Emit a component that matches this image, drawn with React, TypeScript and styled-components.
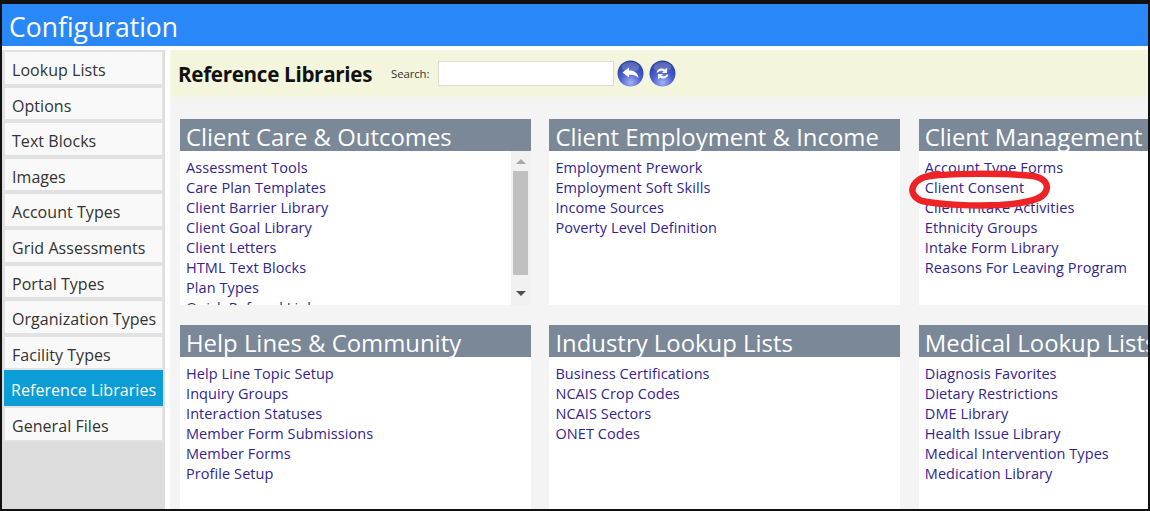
import styled, { createGlobalStyle } from 'styled-components'

const GlobalStyle = createGlobalStyle`
  html, body {
    margin: 0;
    padding: 0;
    width: 1150px;
    height: 511px;
    overflow: hidden;
    background: #000;
    font-family: "Open Sans", "Noto Sans", sans-serif;
  }
`

const Frame = styled.div`
  box-sizing: border-box;
  width: 1150px;
  height: 511px;
  padding: 4px 2px 2px 2px;
  background: #111;
  position: relative;
  overflow: hidden;
`

const Page = styled.div`
  height: 100%;
  background: #fff;
  display: flex;
  flex-direction: column;
`

const Header = styled.div`
  box-sizing: border-box;
  height: 42px;
  flex: none;
  background: #2a87f7;
  color: #fff;
  font-size: 26.5px;
  line-height: 37px;
  padding: 5px 0 0 7px;
`

const Body = styled.div`
  flex: 1;
  min-height: 0;
  margin-top: 4px;
  display: flex;
  gap: 5px;
`

const Sidebar = styled.div`
  width: 163px;
  flex: none;
  background: #dcdcdc;
  box-sizing: border-box;
  padding: 0 1px;
`

const NavItem = styled.div<{ $active?: boolean }>`
  box-sizing: border-box;
  height: 35.6px;
  border: 2px solid ${p => (p.$active ? '#dcdcdc' : '#e2e2e2')};
  border-width: ${p => (p.$active ? '0 1px' : '2px')};
  background: ${p => (p.$active ? '#0d9dd6' : '#f9f9f9')};
  color: ${p => (p.$active ? '#fff' : '#333')};
  font-size: 16px;
  line-height: ${p => (p.$active ? '30px' : '26px')};
  padding: ${p => (p.$active ? '5px 0 0 7px' : '5px 0 0 7px')};
  white-space: nowrap;
  letter-spacing: 0.05px;
`

const Main = styled.div`
  flex: 1;
  min-width: 0;
  background: #f4f4f4;
  overflow: hidden;
`

const Toolbar = styled.div`
  height: 47px;
  background: #f3f5dd;
  display: flex;
  align-items: center;
  padding-left: 8px;
`

const Title = styled.div`
  font-size: 20.6px;
  font-weight: 700;
  color: #111;
  width: 213px;
  letter-spacing: -0.3px;
  margin-top: 1px;
`

const SearchLabel = styled.div`
  font-size: 11.4px;
  color: #333;
  width: 47px;
  letter-spacing: -0.1px;
`

const SearchInput = styled.div`
  box-sizing: border-box;
  width: 176px;
  height: 25px;
  background: #fff;
  border: 1px solid #dcdcd0;
  margin-right: 3px;
`

const RoundIcon = styled.svg`
  width: 27px;
  height: 27px;
  margin-right: 5px;
`

const Grid = styled.div`
  display: grid;
  grid-template-columns: 351px 351px 351px;
  grid-template-rows: 186px 186px;
  column-gap: 18.4px;
  row-gap: 20px;
  padding: 22px 0 0 10px;
`

const Card = styled.div`
  background: #fff;
  position: relative;
  overflow: hidden;
  min-width: 0;
`

const CardHeader = styled.div`
  box-sizing: border-box;
  height: 32px;
  background: #7a8898;
  color: #fff;
  font-size: 23.9px;
  line-height: 28px;
  padding: 4px 0 0 6px;
  white-space: nowrap;
`

const LinkList = styled.div`
  padding: 7px 0 0 6px;
  height: 147px;
  overflow: hidden;
`

const LibLink = styled.div`
  font-size: 14.5px;
  line-height: 20px;
  color: #33248f;
  white-space: nowrap;
  letter-spacing: 0.08px;
`

const Track = styled.div`
  position: absolute;
  top: 32px;
  right: 0;
  bottom: 0;
  width: 20px;
  background: #f1f1f1;
`

const Thumb = styled.div`
  position: absolute;
  top: 20px;
  left: 2px;
  width: 15px;
  height: 104px;
  background: #c0c0c0;
`

const ArrowUp = styled.div`
  position: absolute;
  top: 8px;
  left: 5px;
  border-left: 5px solid transparent;
  border-right: 5px solid transparent;
  border-bottom: 5px solid #a8a8a8;
`

const ArrowDown = styled.div`
  position: absolute;
  bottom: 9px;
  left: 5px;
  border-left: 5px solid transparent;
  border-right: 5px solid transparent;
  border-top: 5px solid #505050;
`

const Scribble = styled.svg`
  position: absolute;
  left: 905px;
  top: 165px;
  width: 150px;
  height: 50px;
`

const sections = [
  {
    title: 'Client Care & Outcomes',
    scroll: true,
    links: ['Assessment Tools', 'Care Plan Templates', 'Client Barrier Library', 'Client Goal Library', 'Client Letters', 'HTML Text Blocks', 'Plan Types', 'Quick Referral Links'],
  },
  {
    title: 'Client Employment & Income',
    links: ['Employment Prework', 'Employment Soft Skills', 'Income Sources', 'Poverty Level Definition'],
  },
  {
    title: 'Client Management',
    links: ['Account Type Forms', 'Client Consent', 'Client Intake Activities', 'Ethnicity Groups', 'Intake Form Library', 'Reasons For Leaving Program'],
  },
  {
    title: 'Help Lines & Community',
    links: ['Help Line Topic Setup', 'Inquiry Groups', 'Interaction Statuses', 'Member Form Submissions', 'Member Forms', 'Profile Setup'],
  },
  {
    title: 'Industry Lookup Lists',
    links: ['Business Certifications', 'NCAIS Crop Codes', 'NCAIS Sectors', 'ONET Codes'],
  },
  {
    title: 'Medical Lookup Lists',
    links: ['Diagnosis Favorites', 'Dietary Restrictions', 'DME Library', 'Health Issue Library', 'Medical Intervention Types', 'Medication Library'],
  },
]

const navItems = ['Lookup Lists', 'Options', 'Text Blocks', 'Images', 'Account Types', 'Grid Assessments', 'Portal Types', 'Organization Types', 'Facility Types', 'Reference Libraries', 'General Files']

const Ball = ({ id }: { id: string }) => (
  <>
    <defs>
      <radialGradient id={id} cx="50%" cy="85%" r="80%">
        <stop offset="0%" stopColor="#a3b2f5" />
        <stop offset="50%" stopColor="#4a60cc" />
        <stop offset="100%" stopColor="#2a3ca0" />
      </radialGradient>
    </defs>
    <circle cx="13.5" cy="13.5" r="13" fill={`url(#${id})`} />
    <ellipse cx="13.5" cy="7" rx="9" ry="5" fill="#fff" opacity="0.2" />
  </>
)

export default function App() {
  return (
    <Frame>
      <GlobalStyle />
      <Page>
        <Header>Configuration</Header>
        <Body>
          <Sidebar>
            {navItems.map(n => (
              <NavItem key={n} $active={n === 'Reference Libraries'}>{n}</NavItem>
            ))}
          </Sidebar>
          <Main>
            <Toolbar>
              <Title>Reference Libraries</Title>
              <SearchLabel>Search:</SearchLabel>
              <SearchInput />
              <RoundIcon viewBox="0 0 27 27">
                <Ball id="backBall" />
                <path d="M5.5 12.5 L12 7.5 V10.4 C17.5 10.4 21 13 21.5 18 C19.5 15.6 16.5 14.7 12 14.8 V17.5 Z" fill="#fff" />
              </RoundIcon>
              <RoundIcon viewBox="0 0 27 27">
                <Ball id="refreshBall" />
                <path d="M7.5 12.5 C8.5 9 12.5 7.5 16 9.5 L18 7.8 V13 H12.8 L14.6 11.2 C12.3 10.2 10.2 10.8 9.2 12.5 Z" fill="#fff" />
                <path d="M19.5 14.5 C18.5 18 14.5 19.5 11 17.5 L9 19.2 V14 H14.2 L12.4 15.8 C14.7 16.8 16.8 16.2 17.8 14.5 Z" fill="#fff" />
              </RoundIcon>
            </Toolbar>
            <Grid>
              {sections.map(s => (
                <Card key={s.title}>
                  <CardHeader>{s.title}</CardHeader>
                  <LinkList>
                    {s.links.map(l => <LibLink key={l}>{l}</LibLink>)}
                  </LinkList>
                  {s.scroll && (
                    <Track>
                      <ArrowUp />
                      <Thumb />
                      <ArrowDown />
                    </Track>
                  )}
                </Card>
              ))}
            </Grid>
          </Main>
        </Body>
      </Page>
      <Scribble viewBox="0 0 150 50">
        <path d="M20 12 C40 8 100 8 128 11 C139 13 144 19 141 26 C138 34 125 38 95 40 C70 41 35 40 17 36 C9 33 6 27 8 22 C10 16 18 11 33 9" fill="none" stroke="#ee2326" strokeWidth="6.5" strokeLinecap="round" />
      </Scribble>
    </Frame>
  )
}
